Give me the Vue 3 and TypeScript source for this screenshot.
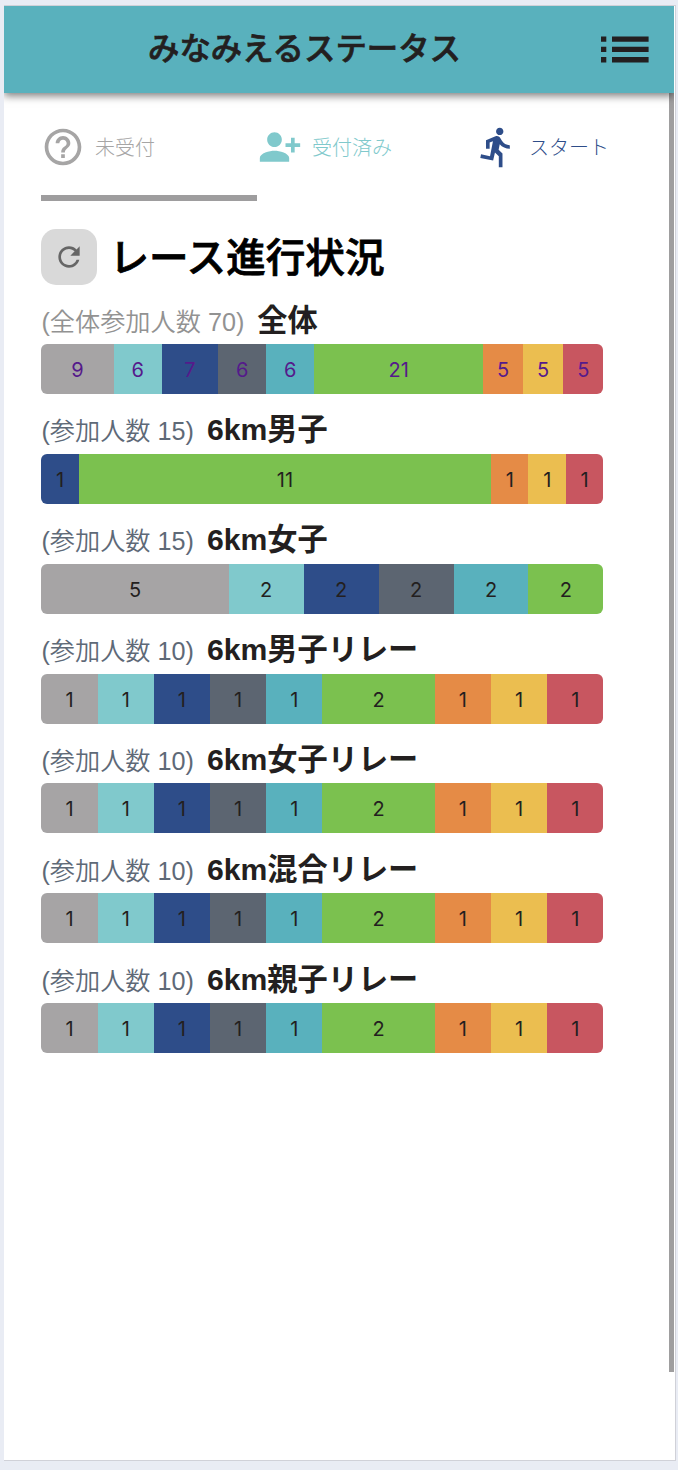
<script setup lang="ts">
type Kind = 'waiting' | 'accepted' | 'start' | 'slate' | 'teal' | 'green' | 'orange' | 'yellow' | 'red'

interface Segment {
  kind: Kind
  count: number
}

interface Race {
  name: string
  caption: string
  overall: boolean
  segments: Segment[]
}

const kinds: Kind[] = ['waiting', 'accepted', 'start', 'slate', 'teal', 'green', 'orange', 'yellow', 'red']

function race(name: string, counts: number[], overall = false): Race {
  const total = counts.reduce((sum, n) => sum + n, 0)
  return {
    name,
    caption: `(${overall ? '全体' : ''}参加人数 ${total})`,
    overall,
    segments: kinds.map((kind, i) => ({ kind, count: counts[i] })).filter((s) => s.count > 0),
  }
}

const races: Race[] = [
  race('全体', [9, 6, 7, 6, 6, 21, 5, 5, 5], true),
  race('6km男子', [0, 0, 1, 0, 0, 11, 1, 1, 1]),
  race('6km女子', [5, 2, 2, 2, 2, 2, 0, 0, 0]),
  race('6km男子リレー', [1, 1, 1, 1, 1, 2, 1, 1, 1]),
  race('6km女子リレー', [1, 1, 1, 1, 1, 2, 1, 1, 1]),
  race('6km混合リレー', [1, 1, 1, 1, 1, 2, 1, 1, 1]),
  race('6km親子リレー', [1, 1, 1, 1, 1, 2, 1, 1, 1]),
]

const tabs = [
  {
    id: 'waiting',
    label: '未受付',
    path: 'M11 18h2v-2h-2v2zm1-16C6.48 2 2 6.48 2 12s4.48 10 10 10 10-4.48 10-10S17.52 2 12 2zm0 18c-4.41 0-8-3.59-8-8s3.59-8 8-8 8 3.59 8 8-3.59 8-8 8zm0-14c-2.21 0-4 1.79-4 4h2c0-1.1.9-2 2-2s2 .9 2 2c0 2-3 1.75-3 5h2c0-2.25 3-2.5 3-5 0-2.21-1.79-4-4-4z',
  },
  {
    id: 'accepted',
    label: '受付済み',
    path: 'M13 8c0-2.21-1.79-4-4-4S5 5.79 5 8s1.79 4 4 4 4-1.79 4-4zm2 2v2h3v3h2v-3h3v-2h-3V7h-2v3h-3zM1 18v2h16v-2c0-2.66-5.33-4-8-4s-8 1.34-8 4z',
  },
  {
    id: 'start',
    label: 'スタート',
    path: 'M13.49 5.48c1.1 0 2-.9 2-2s-.9-2-2-2-2 .9-2 2 .9 2 2 2zm-3.6 13.9l1-4.4 2.1 2v6h2v-7.5l-2.1-2 .6-3c1.3 1.5 3.3 2.5 5.5 2.5v-2c-1.9 0-3.5-1-4.3-2.4l-1-1.6c-.4-.6-1-1-1.7-1-.3 0-.5.1-.8.1l-5.2 2.2v4.7h2v-3.4l1.8-.7-1.6 8.1-4.9-1-.4 2 7 1.4z',
  },
]
</script>

<template>
  <div class="page">
    <div class="screen">
      <header class="bar">
        <h1>みなみえるステータス</h1>
        <svg class="menu" viewBox="0 0 48 28" aria-hidden="true">
          <path d="M0 .5h5.3v5.3H0zM0 10.8h5.3v5.3H0zM0 21h5.3v5.5H0zM11 .5h36.6v5.3H11zM11 10.8h36.6v5.3H11zM11 21h36.6v5.5H11z" />
        </svg>
      </header>

      <nav class="tabs">
        <div v-for="tab in tabs" :key="tab.id" class="tab" :class="tab.id">
          <svg viewBox="0 0 24 24" aria-hidden="true"><path :d="tab.path" /></svg>
          <span>{{ tab.label }}</span>
        </div>
      </nav>

      <main>
        <div class="title">
          <button type="button" aria-label="更新">
            <svg viewBox="0 0 24 24"><path d="M17.65 6.35C16.2 4.9 14.21 4 12 4c-4.42 0-7.99 3.58-7.99 8s3.57 8 7.99 8c3.73 0 6.84-2.55 7.73-6h-2.08c-.82 2.33-3.04 4-5.65 4-3.31 0-6-2.69-6-6s2.69-6 6-6c1.66 0 3.14.69 4.22 1.78L13 11h7V4l-2.35 2.35z" /></svg>
          </button>
          <h2>レース進行状況</h2>
        </div>

        <section v-for="r in races" :key="r.name" class="race" :class="{ overall: r.overall }">
          <div class="heading">
            <span class="caption">{{ r.caption }}</span>
            <h3>{{ r.name }}</h3>
          </div>
          <div class="progress">
            <div v-for="s in r.segments" :key="s.kind" class="segment" :class="'is-' + s.kind" :style="{ flexGrow: s.count }">
              {{ s.count }}
            </div>
          </div>
        </section>
      </main>
      <div class="scrollbar"></div>
    </div>
  </div>
</template>

<style>
body {
  background: #e9ecf4;
}
</style>

<style scoped>
.page {
  box-sizing: border-box;
  height: 1470px;
  padding: 5px 2px 9px 4px;
  background: #e9ecf4;
  font-family: 'Liberation Sans', 'Noto Sans CJK JP', sans-serif;
  overflow: hidden;
}
.screen {
  position: relative;
  box-sizing: border-box;
  height: 1456px;
  background: #fff;
  border: solid #d0d1d8;
  border-width: 1px 1px 1px 0;
}
h1,
h2,
h3 {
  margin: 0;
}
.bar {
  position: relative;
  z-index: 2;
  display: flex;
  align-items: center;
  box-sizing: border-box;
  width: 670px;
  height: 87px;
  padding: 1px 25px 0 144px;
  background: #59b1bd;
  box-shadow: 0 3px 8px rgba(0, 0, 0, 0.5);
  clip-path: inset(0 0 -20px 0);
}
.bar h1 {
  flex: 1;
  color: #231f20;
  font-size: 31.4px;
  font-weight: 500;
  -webkit-text-stroke: 0.7px #231f20;
  line-height: 46px;
  white-space: nowrap;
}
.menu {
  width: 48px;
  height: 28px;
  fill: #231f20;
}
.tabs {
  display: grid;
  grid-template-columns: 216px 218px 190px;
  height: 108px;
  padding-left: 37px;
}
.tab {
  display: flex;
  align-items: center;
  gap: 10px;
  box-sizing: border-box;
  border-bottom: 6px solid transparent;
  font-size: 20px;
  font-weight: 300;
  white-space: nowrap;
}
.tab svg {
  width: 44px;
  height: 44px;
  margin-top: 5px;
  fill: currentColor;
}
.tab span {
  margin-top: 4px;
}
.tab.waiting {
  color: #a6a5a5;
  border-color: #9e9d9e;
}
.tab.accepted {
  padding-left: 1px;
  color: #80c9cc;
}
.tab.start {
  color: #2e4d89;
}
main {
  padding: 27.5px 71px 0 37.4px;
}
.title {
  display: flex;
  align-items: center;
  gap: 12px;
}
.title button {
  display: grid;
  place-items: center;
  width: 56px;
  height: 56px;
  padding: 0;
  border: 0;
  border-radius: 15px;
  background: #d9d9d9;
}
.title svg {
  width: 32px;
  height: 32px;
  fill: #666;
}
.title h2 {
  padding-top: 2px;
  color: #000;
  font-size: 39.6px;
  font-weight: 500;
  -webkit-text-stroke: 0.8px #000;
  line-height: 54px;
}
.race {
  width: 562px;
  height: 109.85px;
}
.heading {
  display: flex;
  align-items: baseline;
  gap: 13px;
  height: 59.5px;
  line-height: 72px;
  white-space: nowrap;
}
.caption {
  color: #5e6977;
  font-size: 25.2px;
  font-weight: 350;
}
.overall .caption {
  color: #929292;
}
.heading h3 {
  color: #231f20;
  font-size: 30.2px;
  font-weight: 700;
}
.progress {
  display: flex;
  height: 50px;
  border-radius: 6px;
  overflow: hidden;
}
.segment {
  flex: 1 1 0;
  box-sizing: border-box;
  color: #231f20;
  font-family: Inter, sans-serif;
  font-size: 20px;
  line-height: 52px;
  text-align: center;
}
.overall .segment {
  color: #551a8b;
}
.is-waiting { background: #a6a4a5; }
.is-accepted { background: #80c9cc; }
.is-start { background: #2e4d89; }
.is-slate { background: #5c6571; }
.is-teal { background: #59b1bd; }
.is-green { background: #7bc14f; }
.is-orange { background: #e58b46; }
.is-yellow { background: #ebbe50; }
.is-red { background: #c85660; }
.scrollbar {
  position: absolute;
  top: 87px;
  right: 1px;
  width: 5.5px;
  height: 1279px;
  background: #9f9e9f;
}
</style>
